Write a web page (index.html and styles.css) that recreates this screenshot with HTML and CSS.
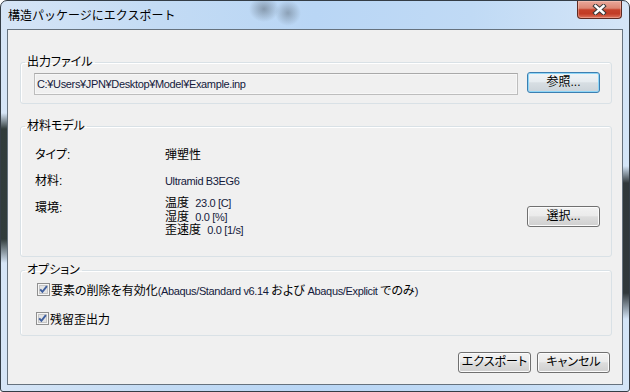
FILE: index.html
```html
<!DOCTYPE html>
<html lang="ja">
<head>
<meta charset="utf-8">
<title>構造パッケージにエクスポート</title>
<link rel="stylesheet" href="styles.css">
</head>
<body>
<div class="window">
  <div class="titlebar">
    <span class="title">構造パッケージにエクスポート</span>
    <div class="close">
      <svg width="15" height="11" viewBox="0 0 15 11">
        <path d="M3.5 2 L11.5 9 M11.5 2 L3.5 9" fill="none" stroke="#3a3a3a" stroke-width="4.4" stroke-linecap="square"/>
        <path d="M3.5 2 L11.5 9 M11.5 2 L3.5 9" fill="none" stroke="#ffffff" stroke-width="2.4" stroke-linecap="square"/>
      </svg>
    </div>
  </div>
  <div class="client">
    <fieldset class="group">
      <legend>出力ファイル</legend>
      <div class="file-row">
        <div class="textbox en">C:¥Users¥JPN¥Desktop¥Model¥Example.inp</div>
        <button class="btn default">参照...</button>
      </div>
    </fieldset>

    <fieldset class="group g2">
      <legend>材料モデル</legend>
      <div class="mat">
        <div class="prop"><span class="k">タイプ:</span><span class="v">弾塑性</span></div>
        <div class="prop p2"><span class="k">材料:</span><span class="v en">Ultramid B3EG6</span></div>
        <div class="prop p3">
          <span class="k env">環境:</span>
          <div class="v env-lines">
            <div>温度 <span class="en num">23.0 [C]</span></div>
            <div>湿度 <span class="en num">0.0 [%]</span></div>
            <div>歪速度 <span class="en num">0.0 [1/s]</span></div>
          </div>
          <button class="btn select">選択...</button>
        </div>
      </div>
    </fieldset>

    <fieldset class="group g3">
      <legend>オプション</legend>
      <div class="opts">
        <label class="check">
          <svg class="cb" width="13" height="13" viewBox="0 0 13 13">
            <rect x="0.5" y="0.5" width="12" height="12" fill="#f6f6f6" stroke="#8f8f8f"/>
            <rect x="2.5" y="2.5" width="8" height="8" fill="#e4e4e4" stroke="#c6c6c6"/>
            <path d="M3.2 6.3 L5.4 8.8 L9.9 3.2" fill="none" stroke="#3f5f9e" stroke-width="1.9"/>
          </svg>
          <span>要素の削除を有効化<span class="en">(Abaqus/Standard v6.14 </span>および<span class="en"> Abaqus/Explicit </span>でのみ<span class="en">)</span></span>
        </label>
        <label class="check c2">
          <svg class="cb" width="13" height="13" viewBox="0 0 13 13">
            <rect x="0.5" y="0.5" width="12" height="12" fill="#f6f6f6" stroke="#8f8f8f"/>
            <rect x="2.5" y="2.5" width="8" height="8" fill="#e4e4e4" stroke="#c6c6c6"/>
            <path d="M3.2 6.3 L5.4 8.8 L9.9 3.2" fill="none" stroke="#3f5f9e" stroke-width="1.9"/>
          </svg>
          <span>残留歪出力</span>
        </label>
      </div>
    </fieldset>

    <div class="actions">
      <button class="btn">エクスポート</button>
      <button class="btn">キャンセル</button>
    </div>
  </div>
</div>
</body>
</html>
```

FILE: styles.css
```css
html, body {
  margin: 0;
  padding: 0;
  background: #ffffff;
}

.window {
  width: 630px;
  height: 392px;
  box-sizing: border-box;
  border: 1px solid #343d46;
  border-radius: 7px 7px 3px 3px;
  padding: 0 6px 6px 6px;
  display: flex;
  flex-direction: column;
  font-family: "Liberation Sans", "Noto Sans CJK JP", sans-serif;
  font-size: 12px;
  color: #000;
  background:
    radial-gradient(ellipse 15px 13px at 263px 8px, rgba(70, 80, 90, 0.45), rgba(70, 80, 90, 0) 100%),
    radial-gradient(ellipse 13px 13px at 287px 12px, rgba(70, 80, 90, 0.4), rgba(70, 80, 90, 0) 100%),
    linear-gradient(to bottom, rgba(20, 30, 26, 0) 112px, rgba(20, 30, 26, 0.85) 128px, rgba(20, 30, 26, 0.85) 238px, rgba(20, 30, 26, 0) 262px) left top / 7px 100% no-repeat,
    linear-gradient(to bottom, rgba(20, 26, 26, 0) 165px, rgba(20, 26, 26, 0.85) 182px, rgba(20, 26, 26, 0.85) 292px, rgba(20, 26, 26, 0) 318px) right top / 7px 100% no-repeat,
    linear-gradient(to right, #d6e5f6 0%, #c3dbf4 25%, #b9d6f5 50%, #c0daf5 75%, #d4e5f7 100%);
}

.titlebar {
  height: 28px;
  flex: none;
  display: flex;
  align-items: flex-start;
}

.title {
  padding: 8px 0 0 1px;
  line-height: 14px;
  color: #000;
}

.close {
  margin-left: auto;
  margin-right: 1px;
  width: 45px;
  height: 18px;
  box-sizing: border-box;
  border: 1px solid #5e2a22;
  border-top: none;
  border-radius: 0 0 4px 4px;
  background: linear-gradient(to bottom, #e9a89a 0%, #dc8774 42%, #c5412a 52%, #c23c25 75%, #de745d 100%);
  box-shadow: inset 0 0 0 1px rgba(255, 220, 210, 0.35);
  display: flex;
  align-items: center;
  justify-content: center;
}

.client {
  flex: 1;
  border: 1px solid #66727e;
  background: #f0f0f0;
  padding: 26px 10px 0 12px;
  display: flex;
  flex-direction: column;
  font-feature-settings: "palt";
}

.group {
  margin: 0;
  padding: 0;
  min-width: 0;
  border: 1px solid #d9e1e6;
  border-radius: 3px;
  box-shadow: inset 1px 1px 0 #ffffff;
}

.group legend {
  padding: 0 2px;
  margin-left: 4px;
  height: 13px;
  line-height: 13px;
}

.g2 { margin-top: 16px; }
.g3 { margin-top: 7px; }

.en {
  font-size: 11px;
  letter-spacing: -0.35px;
  color: #141a3c;
}

.en.num {
  margin-left: 3px;
}

.file-row {
  display: flex;
  align-items: flex-start;
  gap: 9px;
  padding: 3px 11px 8px 13px;
}

.textbox {
  flex: 1;
  margin-top: 1px;
  height: 22px;
  box-sizing: border-box;
  border: 1px solid #bdbdbd;
  border-top-color: #a9a9a9;
  box-shadow: inset 0 0 0 1px #f7f7f7;
  background: #f0f0f0;
  padding-left: 2px;
  line-height: 20px;
  white-space: nowrap;
}

.btn {
  flex: none;
  width: 73px;
  height: 21px;
  box-sizing: border-box;
  margin: 0;
  padding: 0;
  border: 1px solid #707070;
  border-radius: 3px;
  background: linear-gradient(to bottom, #f2f2f2 0%, #ebebeb 45%, #dddddd 52%, #cfcfcf 100%);
  box-shadow: inset 0 0 0 1px #fbfbfb;
  font-family: "Liberation Sans", "Noto Sans CJK JP", sans-serif;
  font-size: 12px;
  font-feature-settings: "palt";
  line-height: 19px;
  white-space: nowrap;
  color: #000;
}

.btn.default {
  border-color: #3c7fb1;
  box-shadow: inset 0 0 0 1px #8fd6f7;
  background: linear-gradient(to bottom, #f0f4f7 0%, #e6ecf0 45%, #d7dee3 52%, #cbd3d9 100%);
}

.mat {
  height: 123px;
  box-sizing: border-box;
  padding: 15px 11px 0 14px;
}

.prop {
  display: flex;
  align-items: flex-start;
  line-height: 14px;
}

.prop .k {
  width: 130px;
  flex: none;
}

.p2 { margin-top: 12px; }
.p3 { margin-top: 9px; }

.k.env { padding-top: 4px; }

.env-lines {
  line-height: 13.5px;
}

.btn.select {
  margin-left: auto;
  margin-top: 9px;
}

.opts {
  height: 58px;
  box-sizing: border-box;
  padding: 4px 0 0 16px;
}

.check {
  display: flex;
  align-items: center;
  gap: 1px;
  height: 16px;
  white-space: nowrap;
}

.check.c2 {
  margin-top: 13px;
  margin-left: -1px;
}

.cb {
  flex: none;
  display: block;
}

.actions {
  margin-top: 16px;
  display: flex;
  justify-content: flex-end;
  gap: 6px;
  padding-right: 2px;
}
```
